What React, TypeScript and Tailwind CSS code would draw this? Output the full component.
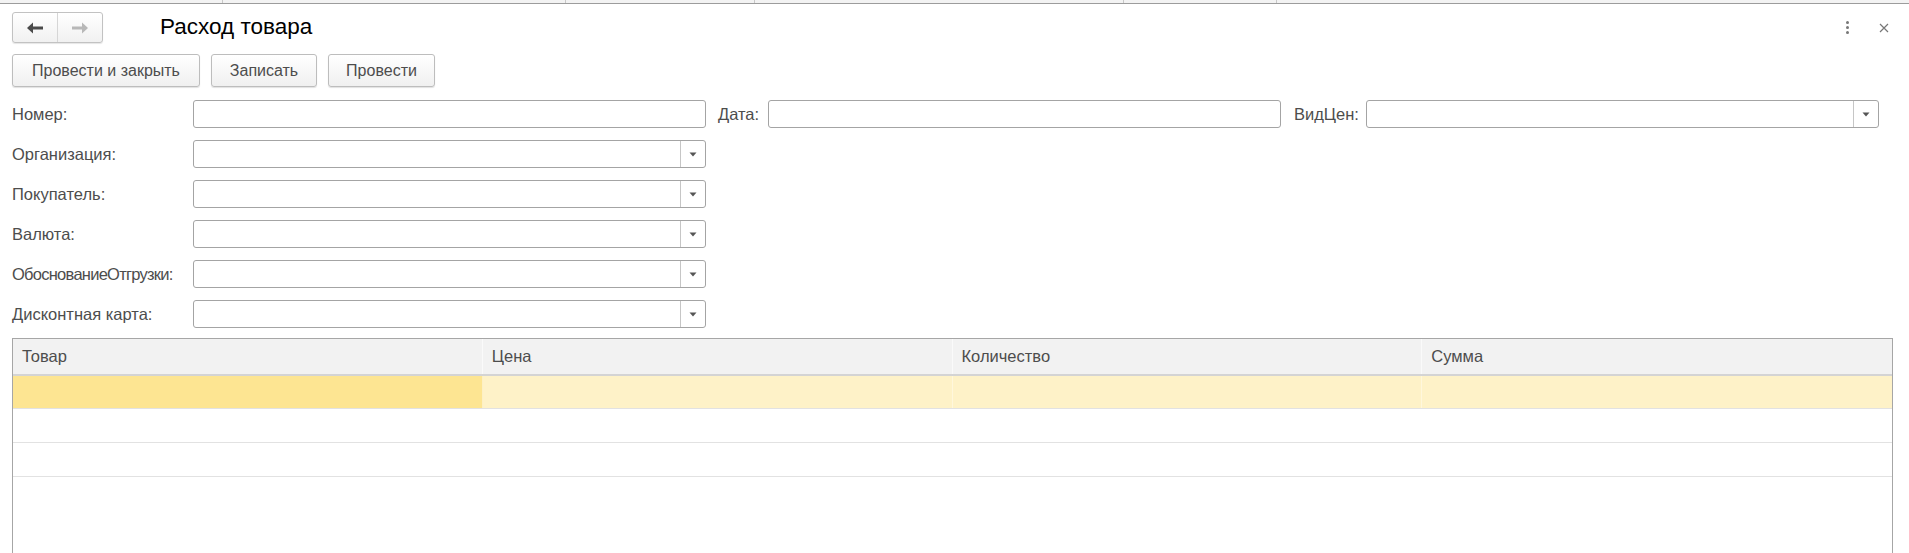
import React from 'react';

const font = { fontFamily: '"Liberation Sans", Arial, sans-serif' };

// ширины вкладок в верхней полосе (обрезанный таб-бар)
const tabWidths = [223, 343, 189, 369, 153];

function Arrow({ dir, color }: { dir: 'left' | 'right'; color: string }) {
  return (
    <svg width="16" height="12" viewBox="0 0 16 12" className={dir === 'right' ? 'rotate-180' : ''}>
      <path d="M0 6 L6 0.5 L6 11.5 Z" fill={color} />
      <rect x="5" y="4.5" width="11" height="3" fill={color} />
    </svg>
  );
}

function DropTriangle() {
  return (
    <svg width="8" height="5" viewBox="0 0 8 5">
      <path d="M0.5 0.5 L7.5 0.5 L4 4.5 Z" fill="#555" />
    </svg>
  );
}

function Input({ width, dropdown }: { width: number; dropdown?: boolean }) {
  return (
    <div
      className="flex h-[28px] shrink-0 rounded-[3px] border border-[#a4a4a4] bg-white"
      style={{ width }}
    >
      <div className="flex-1" />
      {dropdown && (
        <div className="flex w-[25px] items-center justify-center border-l border-[#c6c6c6]">
          <DropTriangle />
        </div>
      )}
    </div>
  );
}

function Btn({ label, width }: { label: string; width: number }) {
  return (
    <button
      className="flex h-[33px] items-center justify-center rounded-[3px] border border-[#bdbdbd] bg-gradient-to-b from-white to-[#f0f0f0] text-[16px] text-[#4d4d4d] shadow-[0_1px_1px_rgba(0,0,0,0.12)]"
      style={{ width }}
    >
      {label}
    </button>
  );
}

const rows = ['Организация:', 'Покупатель:', 'Валюта:', 'ОбоснованиеОтгрузки:', 'Дисконтная карта:'];
const columns = ['Товар', 'Цена', 'Количество', 'Сумма'];

export default function App() {
  return (
    <div className="flex h-[553px] w-[1909px] flex-col overflow-hidden bg-white" style={font}>
      {/* верхняя полоса вкладок */}
      <div className="flex h-[4px] border-b border-[#9c9c9c] bg-[#f3f3f3]">
        {tabWidths.map((w, i) => (
          <div key={i} className="h-full border-r border-[#c8c8c8]" style={{ width: w }} />
        ))}
        <div className="flex-1" />
      </div>

      {/* заголовок */}
      <div className="mt-[8px] flex h-[31px] items-center pl-[12px] pr-[20px]">
        <div className="flex h-[31px] w-[91px] rounded-[3px] border border-[#c2c2c2] bg-gradient-to-b from-white to-[#f1f1f1] shadow-[0_1px_1px_rgba(0,0,0,0.1)]">
          <div className="flex w-[45px] items-center justify-center border-r border-[#d6d6d6]">
            <Arrow dir="left" color="#4a4a4a" />
          </div>
          <div className="flex flex-1 items-center justify-center">
            <Arrow dir="right" color="#b8b8b8" />
          </div>
        </div>
        <div className="ml-[57px] text-[22.5px] leading-none text-black">Расход товара</div>
        <div className="flex-1" />
        <div className="flex flex-col gap-[2px]">
          <div className="h-[3px] w-[3px] rounded-full bg-[#777]" />
          <div className="h-[3px] w-[3px] rounded-full bg-[#777]" />
          <div className="h-[3px] w-[3px] rounded-full bg-[#777]" />
        </div>
        <svg width="10" height="10" viewBox="0 0 10 10" className="ml-[30px]">
          <path d="M1 1 L9 9 M9 1 L1 9" stroke="#777" strokeWidth="1.2" />
        </svg>
      </div>

      {/* кнопки */}
      <div className="mt-[11px] flex gap-[11px] pl-[12px]">
        <Btn label="Провести и закрыть" width={188} />
        <Btn label="Записать" width={106} />
        <Btn label="Провести" width={107} />
      </div>

      {/* реквизиты */}
      <div className="mt-[13px] flex flex-col gap-[12px] pl-[12px] text-[16.5px] text-[#4d4d4d]">
        <div className="flex items-center">
          <div className="w-[181px] shrink-0">Номер:</div>
          <Input width={513} />
          <div className="ml-[12px] w-[50px] shrink-0">Дата:</div>
          <Input width={513} />
          <div className="ml-[13px] w-[72px] shrink-0">ВидЦен:</div>
          <Input width={513} dropdown />
        </div>
        {rows.map((r) => (
          <div key={r} className="flex items-center">
            <div
              className={`w-[181px] shrink-0 whitespace-nowrap ${
                r.length > 18 ? 'tracking-[-0.045em]' : ''
              }`}
            >
              {r}
            </div>
            <Input width={513} dropdown />
          </div>
        ))}
      </div>

      {/* табличная часть */}
      <div className="ml-[12px] mt-[10px] flex w-[1881px] flex-1 flex-col border border-b-0 border-[#a6a6a6]">
        <div className="grid h-[37px] grid-cols-4 border-b-2 border-[#d4d4d4] bg-[#f2f2f2] text-[16.5px] text-[#4d4d4d]">
          {columns.map((c, i) => (
            <div
              key={c}
              className={`flex items-center pl-[9px] ${i < 3 ? 'border-r border-[#fafafa]' : ''}`}
            >
              {c}
            </div>
          ))}
        </div>
        <div className="grid h-[33px] grid-cols-4 border-b border-[#e2e2e2]">
          <div className="border-r border-[#fdf0c4] bg-[#fde592]" />
          <div className="border-r border-[#fff7dc] bg-[#fef2c8]" />
          <div className="border-r border-[#fff7dc] bg-[#fef2c8]" />
          <div className="bg-[#fef2c8]" />
        </div>
        <div className="h-[34px] border-b border-[#e2e2e2]" />
        <div className="h-[34px] border-b border-[#e2e2e2]" />
        <div className="flex-1" />
      </div>
    </div>
  );
}
